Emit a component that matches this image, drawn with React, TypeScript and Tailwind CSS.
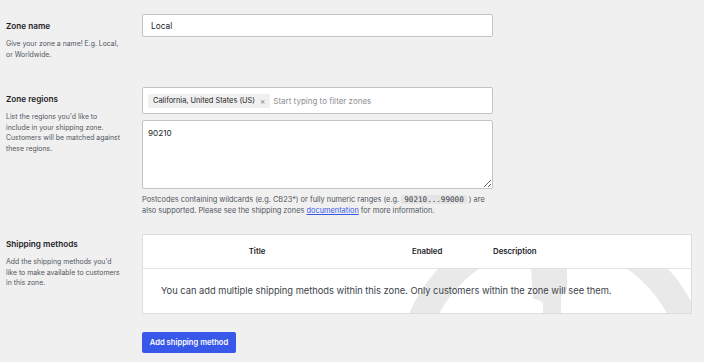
import React from 'react';

const font = { fontFamily: 'Inter, "Noto Sans", sans-serif' };

function Section({
  label,
  desc,
  labelPad,
  children,
  className,
}: {
  label: string;
  desc: React.ReactNode;
  labelPad: string;
  children: React.ReactNode;
  className?: string;
}) {
  return (
    <div className={'flex items-start ' + (className ?? '')}>
      <div className={'w-[142px] shrink-0 pl-[6px] pr-[8px] ' + labelPad}>
        <div className="text-[8.2px] font-semibold leading-[12px] text-[#1d2327]">{label}</div>
        <p className="mt-[7px] whitespace-nowrap text-[6.9px] leading-[10.7px] text-[#50575e]">{desc}</p>
      </div>
      <div className="flex-1">{children}</div>
    </div>
  );
}

export default function App() {
  return (
    <div className="h-[362px] w-[704px] overflow-hidden bg-[#f0f0f0]" style={font}>
      {/* Zone name */}
      <Section
        className="h-[87px] pt-[14px]"
        labelPad="pt-[6px]"
        label="Zone name"
        desc={
          <>
            Give your zone a name! E.g. Local,
            <br />
            or Worldwide.
          </>
        }
      >
        <input
          defaultValue="Local"
          className="block h-[23px] w-[351px] rounded-[2px] border border-[#c3c4c7] bg-white px-[8px] text-[8.3px] text-[#1d2327] outline-none"
          style={font}
        />
      </Section>

      {/* Zone regions */}
      <Section
        className="h-[147px]"
        labelPad="pt-[6px]"
        label="Zone regions"
        desc={
          <>
            List the regions you'd like to
            <br />
            include in your shipping zone.
            <br />
            Customers will be matched against
            <br />
            these regions.
          </>
        }
      >
        <div className="flex h-[27px] w-[351px] items-center gap-[3px] rounded-[2px] border border-[#c3c4c7] bg-white pl-[5px]">
          <span className="flex h-[14px] items-center gap-[5px] rounded-[1px] bg-[#f0f0f0] px-[5px] text-[7.4px] text-[#1d2327]">
            California, United States (US)
            <span className="text-[8px] leading-none text-[#787c82]">×</span>
          </span>
          <span className="text-[8px] text-[#8c8f94]">Start typing to filter zones</span>
        </div>
        <textarea
          defaultValue="90210"
          className="mt-[6px] block h-[69px] w-[351px] rounded-[2px] border border-[#c3c4c7] bg-white px-[5px] py-[6px] text-[8.2px] text-[#1d2327] outline-none"
          style={font}
        />
        <p className="mt-[5px] w-[351px] text-[7.4px] leading-[11px] text-[#50575e]">
          Postcodes containing wildcards (e.g. CB23*) or fully numeric ranges (e.g.{' '}
          <code
            className="rounded-[1px] bg-[#e4e4e4] px-[3px] text-[7.6px] text-[#3c434a]"
            style={{ fontFamily: '"DejaVu Sans Mono", monospace' }}
          >
            90210...99000
          </code>{' '}
          ) are also supported. Please see the shipping zones{' '}
          <a className="text-[#3858e9] underline">documentation</a> for more information.
        </p>
      </Section>

      {/* Shipping methods */}
      <Section
        labelPad="pt-[4px]"
        label="Shipping methods"
        desc={
          <>
            Add the shipping methods you'd
            <br />
            like to make available to customers
            <br />
            in this zone.
          </>
        }
      >
        <div className="w-[550px] border border-[#dcdcde] bg-white">
          <div className="flex h-[34px] items-center border-b border-[#e2e2e2] text-[7.8px] font-semibold text-[#1d2327]">
            <div className="w-[228px] text-center">Title</div>
            <div className="ml-[41px] w-[81px]">Enabled</div>
            <div>Description</div>
          </div>
          <div className="relative h-[44px] overflow-hidden">
            <svg className="absolute left-0 top-0" width="550" height="44" viewBox="0 0 550 44">
              <circle cx="410" cy="106" r="143" fill="none" stroke="#e9e9e9" strokeWidth="27" />
              <path d="M388 0 H424 V22 Q418 24 418 30 V44 H400 V34 Q396 30 390 30 Z" fill="#e9e9e9" />
            </svg>
            <div className="relative flex h-full items-center pl-[18px] text-[9.3px] text-[#3c434a]">
              You can add multiple shipping methods within this zone. Only customers within the zone will see them.
            </div>
          </div>
        </div>
        <button className="mt-[18px] flex h-[21px] w-[94px] items-center justify-center rounded-[2px] bg-[#3858e9] text-[7.6px] font-semibold text-white">
          Add shipping method
        </button>
      </Section>
    </div>
  );
}
